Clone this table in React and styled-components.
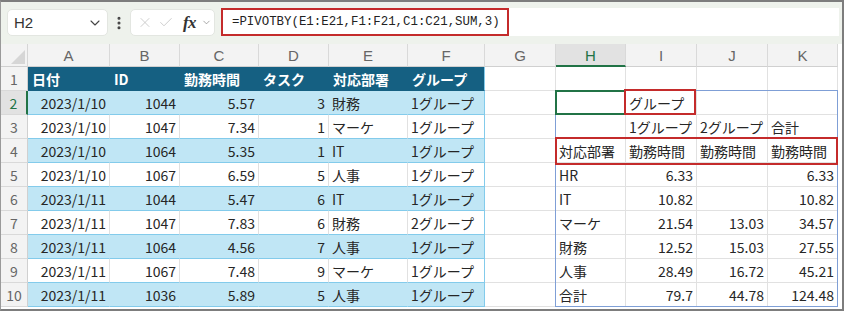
import React from "react";
import styled, { createGlobalStyle } from "styled-components";
import { ChevronDown, EllipsisVertical, X, Check } from "lucide-react";

const GlobalStyle = createGlobalStyle`
  html, body { margin: 0; padding: 0; background: #fff; }
  * { box-sizing: border-box; }
`;

const FONT = `"Noto Sans CJK JP", "Noto Sans", sans-serif`;
const GRID = "#e1e1e1";
const BAND = "#c0e6f5";
const BAND_LINE = "#83cbeb";
const HEAD = "#156082";
const GREEN = "#217346";
const RED = "#c42b2b";
const COLS = "27px 82px 70px 79px 70px 79px 77px 71px 70px 71px 71px 70px";
const ROWS = "23px repeat(10, 24px)";

const Frame = styled.div`
  width: 844px;
  height: 311px;
  overflow: hidden;
  border-top: 2px solid #7d7d7d;
  border-right: 2px solid #7d7d7d;
  border-bottom: 2px solid #7d7d7d;
  border-left: 1px solid #9a9a9a;
  background: #fff;
  font-family: ${FONT};
  display: flex;
  flex-direction: column;
`;

const Toolbar = styled.div`
  height: 42px;
  flex: none;
  background: #eef2ec;
  display: flex;
  align-items: flex-start;
  padding: 7px 3px 0 6px;
`;

const Pill = styled.div`
  height: 27px;
  background: #fff;
  border-radius: 5px;
  border: 1px solid #e3e6e1;
  display: flex;
  align-items: center;
`;

const NameBox = styled(Pill)`
  width: 101px;
  padding: 0 4px 0 6px;
  justify-content: space-between;
  font-family: "Liberation Sans", sans-serif;
  font-size: 15px;
  color: #333;
`;

const Dots = styled.div`
  width: 22px;
  display: flex;
  justify-content: center;
  align-items: center;
  height: 27px;
  color: #444;
`;

const FxBox = styled(Pill)`
  width: 85px;
  padding: 0 2px 0 6px;
  gap: 5px;
  color: #c2c2c2;
`;

const Fx = styled.span`
  font-family: "Liberation Serif", serif;
  font-style: italic;
  font-weight: bold;
  font-size: 17px;
  color: #333;
  margin-left: 4px;
  letter-spacing: -0.5px;
`;

const FormulaField = styled.div`
  flex: 1;
  margin-left: 6px;
  height: 28px;
  margin-top: -1px;
  background: #fff;
  display: flex;
  align-items: stretch;
`;

const FormulaText = styled.div`
  width: 288px;
  border: 2px solid ${RED};
  display: flex;
  align-items: center;
  padding-left: 9px;
  font-family: "Liberation Mono", monospace;
  font-size: 12.4px;
  color: #222;
`;

const Stack = styled.div`
  display: grid;
`;

const Sheet = styled.div`
  grid-area: 1 / 1;
  display: grid;
  grid-template-columns: ${COLS};
  grid-template-rows: ${ROWS};
  font-size: 14px;
  color: #262626;
`;

const Overlay = styled(Sheet)`
  pointer-events: none;
`;

const Corner = styled.div`
  background: #f3f3f3;
  border-right: 1px solid #d6d6d6;
  border-bottom: 1px solid #d0d0d0;
  display: flex;
  align-items: flex-end;
  justify-content: flex-end;
  padding: 0 2px 2px 0;
`;

const ColHead = styled.div`
  background: ${(p) => (p.$active ? "#e2e2e2" : "#f3f3f3")};
  border-right: 1px solid #d9d9d9;
  border-bottom: ${(p) => (p.$active ? `2px solid ${GREEN}` : "1px solid #d0d0d0")};
  color: ${(p) => (p.$active ? GREEN : "#666")};
  font-family: "Liberation Sans", sans-serif;
  font-size: 15px;
  display: flex;
  align-items: center;
  justify-content: center;
  padding-top: 1px;
`;

const RowHead = styled.div`
  background: ${(p) => (p.$active ? "#e2e2e2" : "#f3f3f3")};
  border-right: ${(p) => (p.$active ? `2px solid ${GREEN}` : "1px solid #d0d0d0")};
  border-bottom: 1px solid #d9d9d9;
  color: ${(p) => (p.$active ? GREEN : "#666")};
  display: flex;
  align-items: center;
  justify-content: center;
  font-size: 14px;
`;

const Cell = styled.div`
  background: #fff;
  border-right: 1px solid ${GRID};
  border-bottom: 1px solid ${GRID};
  display: flex;
  align-items: center;
  justify-content: ${(p) => (p.$right ? "flex-end" : "flex-start")};
  padding: 0 3px 0 3px;
  white-space: nowrap;
  overflow: hidden;
`;

const TableCell = styled(Cell)`
  background: ${(p) => (p.$kind === "head" ? HEAD : p.$kind === "band" ? BAND : "#fff")};
  color: ${(p) => (p.$kind === "head" ? "#fff" : "#262626")};
  font-weight: ${(p) => (p.$kind === "head" ? "bold" : "normal")};
  border-bottom-color: ${(p) => (p.$kind === "head" ? HEAD : BAND_LINE)};
  border-right-color: ${(p) =>
    p.$last ? BAND_LINE : p.$kind === "head" ? HEAD : p.$kind === "band" ? BAND : GRID};
  padding-left: ${(p) => (p.$kind === "head" ? "4px" : "3px")};
`;

const Outline = styled.div`
  grid-row: ${(p) => p.$rows};
  grid-column: ${(p) => p.$cols};
  border: ${(p) => p.$width || 2}px solid ${(p) => p.$color};
  margin: ${(p) => p.$inset || "-1px 0 0 -1px"};
`;

const table = [
  ["2023/1/10", "1044", "5.57", "3", "財務", "1グループ"],
  ["2023/1/10", "1047", "7.34", "1", "マーケ", "1グループ"],
  ["2023/1/10", "1064", "5.35", "1", "IT", "1グループ"],
  ["2023/1/10", "1067", "6.59", "5", "人事", "1グループ"],
  ["2023/1/11", "1044", "5.47", "6", "IT", "1グループ"],
  ["2023/1/11", "1047", "7.83", "6", "財務", "2グループ"],
  ["2023/1/11", "1064", "4.56", "7", "人事", "1グループ"],
  ["2023/1/11", "1067", "7.48", "9", "マーケ", "1グループ"],
  ["2023/1/11", "1036", "5.89", "5", "人事", "1グループ"],
];
const tableHead = ["日付", "ID", "勤務時間", "タスク", "対応部署", "グループ"];
const rightCols = [true, true, true, true, false, false];

const pivot = [
  ["", "", "", ""],
  ["", "グループ", "", ""],
  ["", "1グループ", "2グループ", "合計"],
  ["対応部署", "勤務時間", "勤務時間", "勤務時間"],
  ["HR", "6.33", "", "6.33"],
  ["IT", "10.82", "", "10.82"],
  ["マーケ", "21.54", "13.03", "34.57"],
  ["財務", "12.52", "15.03", "27.55"],
  ["人事", "28.49", "16.72", "45.21"],
  ["合計", "79.7", "44.78", "124.48"],
];

const isNum = (v) => /^[\d.]+$/.test(v);
const letters = ["A", "B", "C", "D", "E", "F", "G", "H", "I", "J", "K"];

export default function App() {
  return (
    <>
      <GlobalStyle />
      <Frame>
        <Toolbar>
          <NameBox>
            <span>H2</span>
            <ChevronDown size={16} strokeWidth={1.6} color="#444" />
          </NameBox>
          <Dots>
            <EllipsisVertical size={16} strokeWidth={2.6} />
          </Dots>
          <FxBox>
            <X size={19} strokeWidth={1.2} />
            <Check size={19} strokeWidth={1.2} />
            <Fx>fx</Fx>
            <ChevronDown size={13} strokeWidth={1.4} color="#777" />
          </FxBox>
          <FormulaField>
            <FormulaText>=PIVOTBY(E1:E21,F1:F21,C1:C21,SUM,3)</FormulaText>
          </FormulaField>
        </Toolbar>
        <Stack>
          <Sheet>
            <Corner>
              <svg width="14" height="14" viewBox="0 0 14 14">
                <polygon points="14,0 14,14 0,14" fill="#d6d6d6" />
              </svg>
            </Corner>
            {letters.map((l) => (
              <ColHead key={l} $active={l === "H"}>
                {l}
              </ColHead>
            ))}
            {pivot.map((prow, r) => {
              const kind = r === 0 ? "head" : r % 2 === 1 ? "band" : "plain";
              const trow = r === 0 ? tableHead : table[r - 1];
              return (
                <React.Fragment key={r}>
                  <RowHead $active={r === 1}>{r + 1}</RowHead>
                  {trow.map((v, c) => (
                    <TableCell
                      key={c}
                      $kind={kind}
                      $last={c === 5}
                      $right={r > 0 && rightCols[c]}
                    >
                      {v}
                    </TableCell>
                  ))}
                  <Cell />
                  {prow.map((v, c) => (
                    <Cell key={c} $right={isNum(v)}>
                      {v}
                    </Cell>
                  ))}
                </React.Fragment>
              );
            })}
          </Sheet>
          <Overlay>
            <Outline $rows="3 / 12" $cols="9 / 13" $color="#7f9fd6" $width={1.5} />
            <Outline $rows="3 / 4" $cols="9 / 10" $color={GREEN} />
            <Outline $rows="3 / 4" $cols="10 / 11" $color={RED} $inset="-2px 1px 0 -2px" />
            <Outline $rows="5 / 6" $cols="9 / 13" $color={RED} $inset="-2px 0 -2px -1px" />
          </Overlay>
        </Stack>
      </Frame>
    </>
  );
}
